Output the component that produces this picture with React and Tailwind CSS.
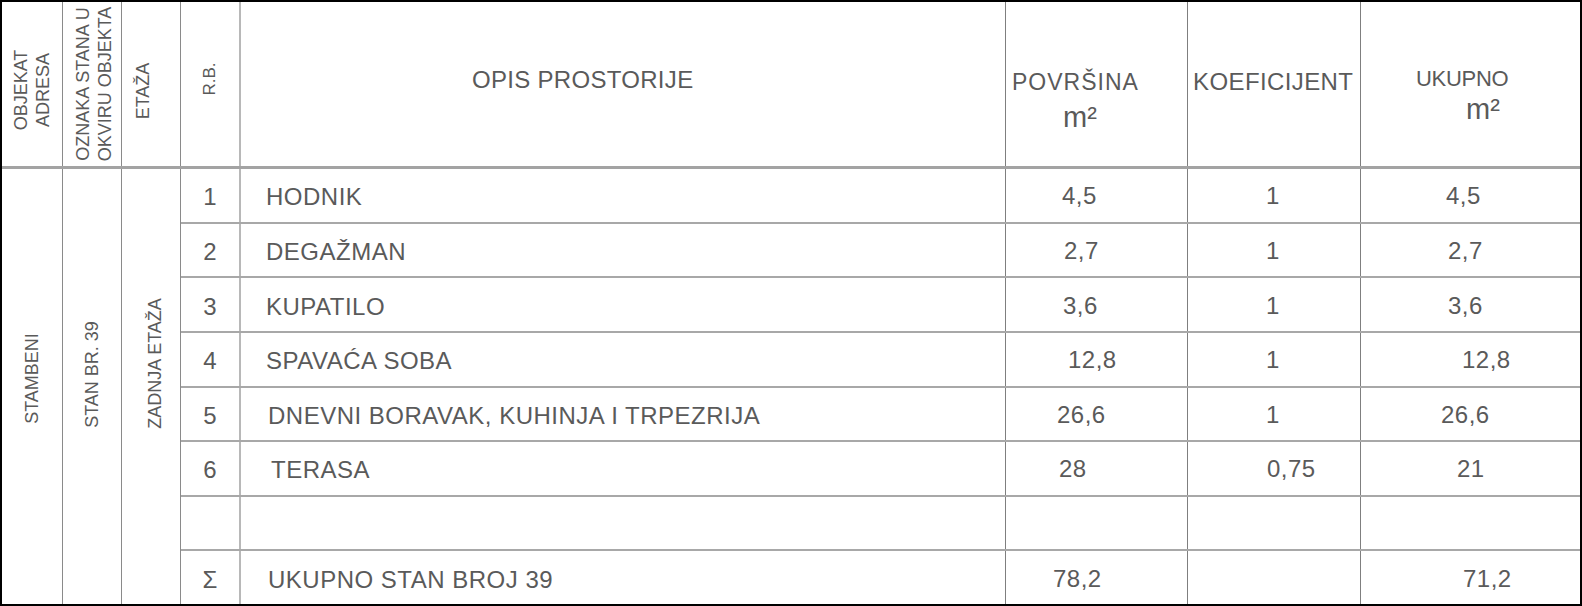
import React from "react";

// Redovi tabele: opis prostorije, površina, koeficijent i ukupno
// (pomaci su ručno podešeni prema crtežu)
const rows = [
  { rb: "1", opis: "HODNIK", opisPad: "pl-[25px]", pov: "4,5", povPad: "pl-[56px]", koef: "1", koefPad: "pl-[78px]", uk: "4,5", ukPad: "pl-[85px]" },
  { rb: "2", opis: "DEGAŽMAN", opisPad: "pl-[25px]", pov: "2,7", povPad: "pl-[58px]", koef: "1", koefPad: "pl-[78px]", uk: "2,7", ukPad: "pl-[87px]" },
  { rb: "3", opis: "KUPATILO", opisPad: "pl-[25px]", pov: "3,6", povPad: "pl-[57px]", koef: "1", koefPad: "pl-[78px]", uk: "3,6", ukPad: "pl-[87px]" },
  { rb: "4", opis: "SPAVAĆA SOBA", opisPad: "pl-[25px]", pov: "12,8", povPad: "pl-[62px]", koef: "1", koefPad: "pl-[78px]", uk: "12,8", ukPad: "pl-[101px]" },
  { rb: "5", opis: "DNEVNI BORAVAK, KUHINJA I TRPEZRIJA", opisPad: "pl-[27px]", pov: "26,6", povPad: "pl-[51px]", koef: "1", koefPad: "pl-[78px]", uk: "26,6", ukPad: "pl-[80px]" },
  { rb: "6", opis: "TERASA", opisPad: "pl-[30px]", pov: "28", povPad: "pl-[53px]", koef: "0,75", koefPad: "pl-[79px]", uk: "21", ukPad: "pl-[96px]" },
  { rb: "", opis: "", opisPad: "", pov: "", povPad: "", koef: "", koefPad: "", uk: "", ukPad: "" },
  { rb: "Σ", opis: "UKUPNO STAN BROJ 39", opisPad: "pl-[27px]", pov: "78,2", povPad: "pl-[47px]", koef: "", koefPad: "", uk: "71,2", ukPad: "pl-[102px]" },
];

export default function App() {
  return (
    <main className="w-[1582px] h-[606px] bg-white border-2 border-black flex flex-col text-[#5a5a5a] font-['Liberation_Sans',Arial,sans-serif] overflow-hidden">
      {/* Zaglavlje */}
      <div className="h-[167px] shrink-0 flex border-b-[3px] border-[#a3a3a3]">
        <div className="w-[61px] shrink-0 border-r border-[#8a8a8a] flex items-center justify-center pt-[12px]">
          <div className="-rotate-90 whitespace-nowrap text-center text-[18px] leading-[22px]">
            OBJEKAT
            <br />
            ADRESA
          </div>
        </div>
        <div className="w-[59px] shrink-0 border-r border-[#8a8a8a] flex items-center justify-center pl-[4px]">
          <div className="-rotate-90 whitespace-nowrap text-center text-[18px] leading-[22px]">
            OZNAKA STANA U
            <br />
            OKVIRU OBJEKTA
          </div>
        </div>
        <div className="w-[59px] shrink-0 border-r border-[#8a8a8a] flex items-center justify-center pt-[14px] pr-[16px]">
          <div className="-rotate-90 whitespace-nowrap text-[18px] leading-[22px]">ETAŽA</div>
        </div>
        <div className="w-[60px] shrink-0 border-r-2 border-[#b8b8b8] flex items-center justify-center pb-[10px]">
          <div className="-rotate-90 whitespace-nowrap text-[17px] leading-[20px]">R.B.</div>
        </div>
        <div className="w-[765px] shrink-0 border-r border-[#7f7f7f] pt-[66px] pl-[231px] text-[24px] leading-[24px] tracking-[0.3px]">
          OPIS PROSTORIJE
        </div>
        <div className="w-[182px] shrink-0 border-r border-[#7f7f7f] pt-[69px] flex flex-col">
          <span className="pl-[6px] text-[23px] leading-[23px] tracking-[1px] whitespace-nowrap">POVRŠINA</span>
          <span className="pl-[57px] mt-[9px] text-[29px] leading-[29px]">m²</span>
        </div>
        <div className="w-[173px] shrink-0 border-r border-[#7f7f7f] pt-[68px] pl-[5px] text-[24px] leading-[24px] tracking-[0.4px] whitespace-nowrap">
          KOEFICIJENT
        </div>
        <div className="flex-1 pt-[66px] flex flex-col">
          <span className="pl-[55px] text-[22px] leading-[22px] tracking-[-0.3px]">UKUPNO</span>
          <span className="pl-[105px] mt-[5px] text-[29px] leading-[29px]">m²</span>
        </div>
      </div>

      {/* Tijelo tabele */}
      <div className="flex-1 flex min-h-0">
        <div className="w-[61px] shrink-0 border-r border-[#8a8a8a] flex items-center justify-center pb-[16px]">
          <div className="-rotate-90 whitespace-nowrap text-[18px]">STAMBENI</div>
        </div>
        <div className="w-[59px] shrink-0 border-r border-[#8a8a8a] flex items-center justify-center pb-[24px]">
          <div className="-rotate-90 whitespace-nowrap text-[18px]">STAN BR. 39</div>
        </div>
        <div className="w-[59px] shrink-0 border-r border-[#8a8a8a] flex items-center justify-center pb-[46px] pl-[8px]">
          <div className="-rotate-90 whitespace-nowrap text-[18px]">ZADNJA ETAŽA</div>
        </div>

        <div className="flex-1 flex flex-col">
          {rows.map((row, i) => (
            <div
              key={i}
              className={
                i < rows.length - 1
                  ? "flex-1 flex border-b-2 border-[#a8a8a8]"
                  : "flex-1 flex"
              }
            >
              <div className="w-[60px] shrink-0 border-r-2 border-[#b8b8b8] flex items-center justify-center pt-[4px] text-[24px]">
                {row.rb}
              </div>
              <div className={`w-[765px] shrink-0 border-r border-[#7f7f7f] flex items-center pt-[4px] text-[24px] tracking-[0.5px] whitespace-nowrap ${row.opisPad}`}>
                {row.opis}
              </div>
              <div className={`w-[182px] shrink-0 border-r border-[#7f7f7f] flex items-center pt-[2px] text-[24px] tracking-[0.5px] ${row.povPad}`}>
                {row.pov}
              </div>
              <div className={`w-[173px] shrink-0 border-r border-[#7f7f7f] flex items-center pt-[2px] text-[24px] tracking-[0.5px] ${row.koefPad}`}>
                {row.koef}
              </div>
              <div className={`flex-1 flex items-center pt-[2px] text-[24px] tracking-[0.5px] ${row.ukPad}`}>
                {row.uk}
              </div>
            </div>
          ))}
        </div>
      </div>
    </main>
  );
}
